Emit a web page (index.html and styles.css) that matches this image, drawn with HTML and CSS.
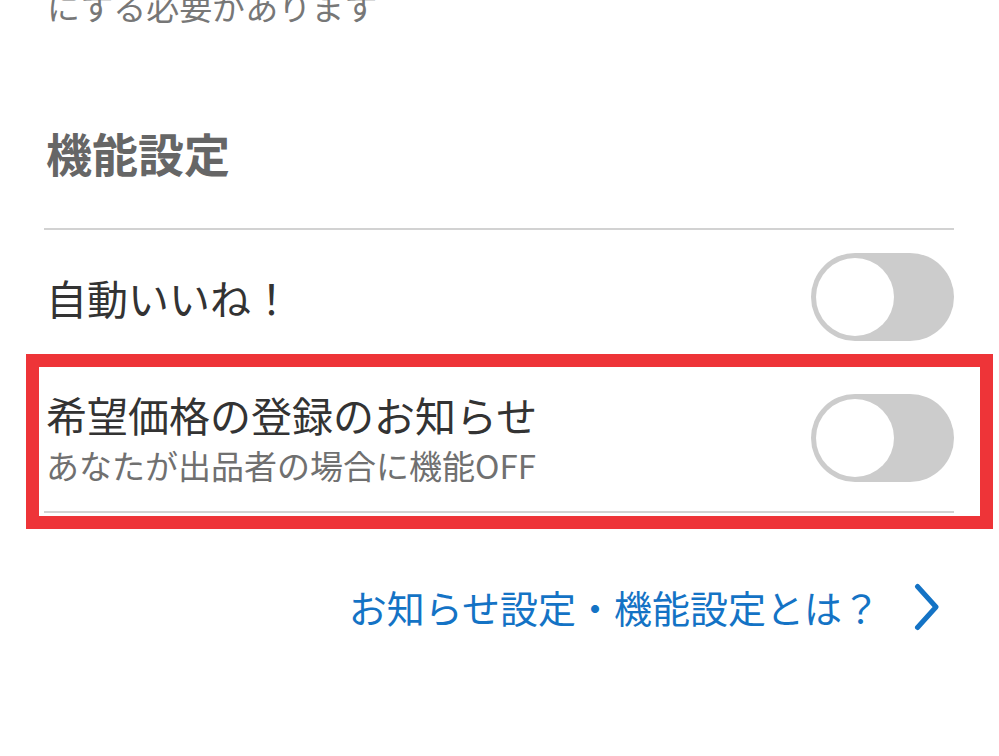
FILE: index.html
```html
<!DOCTYPE html>
<html lang="ja">
<head>
<meta charset="utf-8">
<title>機能設定</title>
<link rel="stylesheet" href="styles.css">
</head>
<body>
<div class="page">
  <p class="intro">にする必要があります</p>
  <h2 class="section-title">機能設定</h2>
  <ul class="settings">
    <li class="setting">
      <div class="setting-text">
        <span class="setting-label">自動いいね！</span>
      </div>
      <span class="toggle"><span class="knob"></span></span>
    </li>
    <li class="setting setting--sub">
      <div class="setting-text">
        <span class="setting-label">希望価格の登録のお知らせ</span>
        <span class="setting-note">あなたが出品者の場合に機能OFF</span>
      </div>
      <span class="toggle"><span class="knob"></span></span>
    </li>
  </ul>
  <a class="help-link" href="#">
    <span>お知らせ設定・機能設定とは？</span>
    <svg class="chevron" width="26" height="48" viewBox="0 0 26 48" aria-hidden="true">
      <polyline points="3.5,3.5 22,24 3.5,44.5" fill="none" stroke="#1473c5" stroke-width="5" stroke-linecap="round" stroke-linejoin="round"/>
    </svg>
  </a>
  <div class="highlight"></div>
</div>
</body>
</html>
```

FILE: styles.css
```css
* {
  box-sizing: border-box;
}

html, body {
  margin: 0;
  padding: 0;
  background: #ffffff;
  overflow: hidden;
}

body {
  font-family: "Noto Sans CJK JP", "Noto Sans", sans-serif;
  width: 999px;
  height: 756px;
}

.page {
  position: relative;
  display: flow-root;
  padding: 0 45px 0 44px;
  height: 756px;
}

.intro {
  margin: -10px 0 0 3px;
  font-size: 33px;
  line-height: 1;
  color: #777777;
}

.section-title {
  margin: 106px 0 0 2px;
  font-size: 46px;
  line-height: 1;
  font-weight: 700;
  color: #666666;
}

.settings {
  list-style: none;
  margin: 53px 0 0;
  padding: 0;
  border-top: 2px solid #d2d2d2;
}

.setting {
  display: flex;
  align-items: center;
  justify-content: space-between;
  padding: 23px 0;
  border-bottom: 2px solid #d2d2d2;
}

.setting--sub {
  padding: 28px 0 29px;
}

.setting-text {
  display: flex;
  flex-direction: column;
  gap: 14px;
  padding-left: 2px;
}

.setting-label {
  font-size: 41px;
  line-height: 1;
  color: #333333;
}

.setting-note {
  font-size: 33px;
  line-height: 1;
  color: #707070;
}

.toggle {
  position: relative;
  display: flex;
  align-items: center;
  width: 143px;
  height: 88px;
  padding-left: 5px;
  border-radius: 44px;
  background: #cccccc;
  flex-shrink: 0;
}

.knob {
  width: 78px;
  height: 78px;
  border-radius: 50%;
  background: #ffffff;
}

.help-link {
  display: flex;
  align-items: center;
  justify-content: flex-end;
  gap: 34px;
  margin-top: 70px;
  padding-right: 14px;
  font-size: 38px;
  line-height: 1;
  color: #1473c5;
  text-decoration: none;
}

.chevron {
  display: block;
}

.highlight {
  position: absolute;
  left: 26px;
  top: 354px;
  width: 967px;
  height: 175px;
  border: 13px solid #ee3438;
  pointer-events: none;
}
```
